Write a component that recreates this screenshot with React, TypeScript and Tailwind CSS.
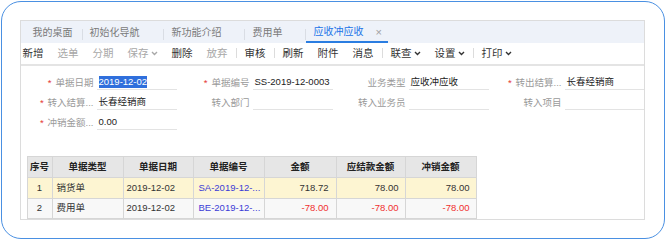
import React from "react";

const tabs = [
  { label: "我的桌面", cls: "w-[62px] pl-[12px]" },
  { label: "初始化导航", cls: "w-[81px] pl-[7px]" },
  { label: "新功能介绍", cls: "w-[81px] pl-[8px]" },
  { label: "费用单", cls: "w-[61px] pl-[8px]" },
];

const tools = [
  { t: "新增", on: true, first: true },
  { t: "选单" },
  { t: "分期" },
  { t: "保存", menu: true },
  { t: "删除", on: true },
  { t: "放弃" },
  { sep: true },
  { t: "审核", on: true },
  { sep: true },
  { t: "刷新", on: true },
  { t: "附件", on: true },
  { t: "消息", on: true },
  { sep: true },
  { t: "联查", on: true, menu: true },
  { t: "设置", on: true, menu: true },
  { sep: true },
  { t: "打印", on: true, menu: true },
];

const Chevron = () => (
  <svg width="7" height="5" viewBox="0 0 7 5" className="ml-[2px] mt-[1px]">
    <path d="M1 1l2.5 2.5L6 1" fill="none" stroke="currentColor" strokeWidth="1.4" />
  </svg>
);

type FieldProps = {
  label?: string;
  req?: boolean;
  value?: string;
  sel?: boolean;
  line?: boolean;
};

const Field = ({ label, req, value, sel, line = true }: FieldProps) => (
  <div className="flex w-[156px] h-[20px] items-end">
    <div className="w-[73px] flex justify-end items-end pb-[1px] leading-[12px] text-[#9a9a9a] whitespace-nowrap">
      {req && <span className="text-[#e53935] mr-[4px]">*</span>}
      {label}
    </div>
    {line ? (
      <div className="w-[80px] ml-[3px] h-full border-b border-[#e3e3e3] flex items-end pb-[1px] pl-[2px] leading-[12px] text-[#222] whitespace-nowrap">
        {sel ? <span className="bg-[#2f6fdc] text-white">{value}</span> : value}
      </div>
    ) : null}
  </div>
);

const rows = [
  { no: "1", type: "销货单", date: "2019-12-02", code: "SA-2019-12-...", amt: "718.72", due: "78.00", off: "78.00", neg: false },
  { no: "2", type: "费用单", date: "2019-12-02", code: "BE-2019-12-...", amt: "-78.00", due: "-78.00", off: "-78.00", neg: true },
];

export default function App() {
  return (
    <div className="w-[666px] h-[240px] bg-white p-[1px] font-[family-name:'Liberation_Sans','Noto_Sans_CJK_SC',sans-serif]">
      <div className="w-[664px] h-[238px] rounded-[20px] border-[1.5px] border-[#4a90e2] pl-[17.5px] pt-[17.5px]">
        <div className="w-[625px] h-[200px] border border-[#dcdcdc] bg-white overflow-hidden">
          {/* tabs */}
          <div className="h-[22px] bg-[#eef2f9] flex items-stretch text-[10px] text-[#7a7a7a]">
            {tabs.map((tab, i) => (
              <div key={tab.label} className={`${tab.cls} flex items-center pt-[3px] relative leading-[12px]`}>
                {tab.label}
                <span className="absolute right-0 top-[8px] h-[11px] w-px bg-[#d9dde4]" />
              </div>
            ))}
            <div className="w-[82px] pl-[8px] flex items-center pt-[3px] leading-[12px] text-[#1a73e8] border-b-2 border-[#2a7de1]">
              应收冲应收
              <span className="ml-[12px] text-[#a0a0a0] text-[11px]">×</span>
            </div>
          </div>
          {/* toolbar */}
          <div className="h-[23px] border-b-2 border-[#e4e4e4] flex items-center text-[10.5px] leading-[12px]">
            {tools.map((it, i) =>
              it.sep ? (
                <span key={i} className="w-px h-[10px] bg-[#dcdcdc] mx-[1px]" />
              ) : (
                <div
                  key={i}
                  className={`flex items-center ${it.first ? "pl-[2px] pr-[7px]" : "px-[7px]"} ${it.on ? "text-[#333]" : "text-[#a8a8a8]"}`}
                >
                  {it.t}
                  {it.menu && <Chevron />}
                </div>
              )
            )}
          </div>
          {/* form */}
          <div className="pt-[4px] text-[9.5px]">
            <div className="flex">
              <Field label="单据日期" req value="2019-12-02" sel />
              <Field label="单据编号" req value="SS-2019-12-0003" />
              <Field label="业务类型" value="应收冲应收" />
              <Field label="转出结算..." req value="长春经销商" />
            </div>
            <div className="flex">
              <Field label="转入结算..." req value="长春经销商" />
              <Field label="转入部门" />
              <Field label="转入业务员" />
              <Field label="转入项目" />
            </div>
            <div className="flex">
              <Field label="冲销金额..." req value="0.00" />
            </div>
          </div>
          {/* grid */}
          <table className="mt-[26px] ml-[6px] border-collapse text-[9.5px] leading-[12px] text-[#333]">
            <thead>
              <tr className="h-[21px] bg-[#e6e6e6] text-[#222] font-bold">
                <th className="w-[25px] border border-[#d6d6d6] font-bold">序号</th>
                <th className="w-[71px] border border-[#d6d6d6] font-bold">单据类型</th>
                <th className="w-[70px] border border-[#d6d6d6] font-bold">单据日期</th>
                <th className="w-[71px] border border-[#d6d6d6] font-bold">单据编号</th>
                <th className="w-[72px] border border-[#d6d6d6] font-bold">金额</th>
                <th className="w-[69px] border border-[#d6d6d6] font-bold">应结款金额</th>
                <th className="w-[71px] border border-[#d6d6d6] font-bold">冲销金额</th>
              </tr>
            </thead>
            <tbody>
              {rows.map((r) => (
                <tr key={r.no} className={r.neg ? "h-[20px] bg-[#f8f8f8]" : "h-[21px] bg-[#fdf5d2]"}>
                  <td className="border border-[#d6d6d6] text-center">{r.no}</td>
                  <td className="border border-[#d6d6d6] pl-[4px]">{r.type}</td>
                  <td className="border border-[#d6d6d6] pl-[3px]">{r.date}</td>
                  <td className="border border-[#d6d6d6] pl-[5px] text-[#3b3bd6]">{r.code}</td>
                  <td className={`border border-[#d6d6d6] text-right pr-[7px] ${r.neg ? "text-[#f0302e]" : ""}`}>{r.amt}</td>
                  <td className={`border border-[#d6d6d6] text-right pr-[6px] ${r.neg ? "text-[#f0302e]" : ""}`}>{r.due}</td>
                  <td className={`border border-[#d6d6d6] text-right pr-[6px] ${r.neg ? "text-[#f0302e]" : ""}`}>{r.off}</td>
                </tr>
              ))}
            </tbody>
          </table>
        </div>
      </div>
    </div>
  );
}
